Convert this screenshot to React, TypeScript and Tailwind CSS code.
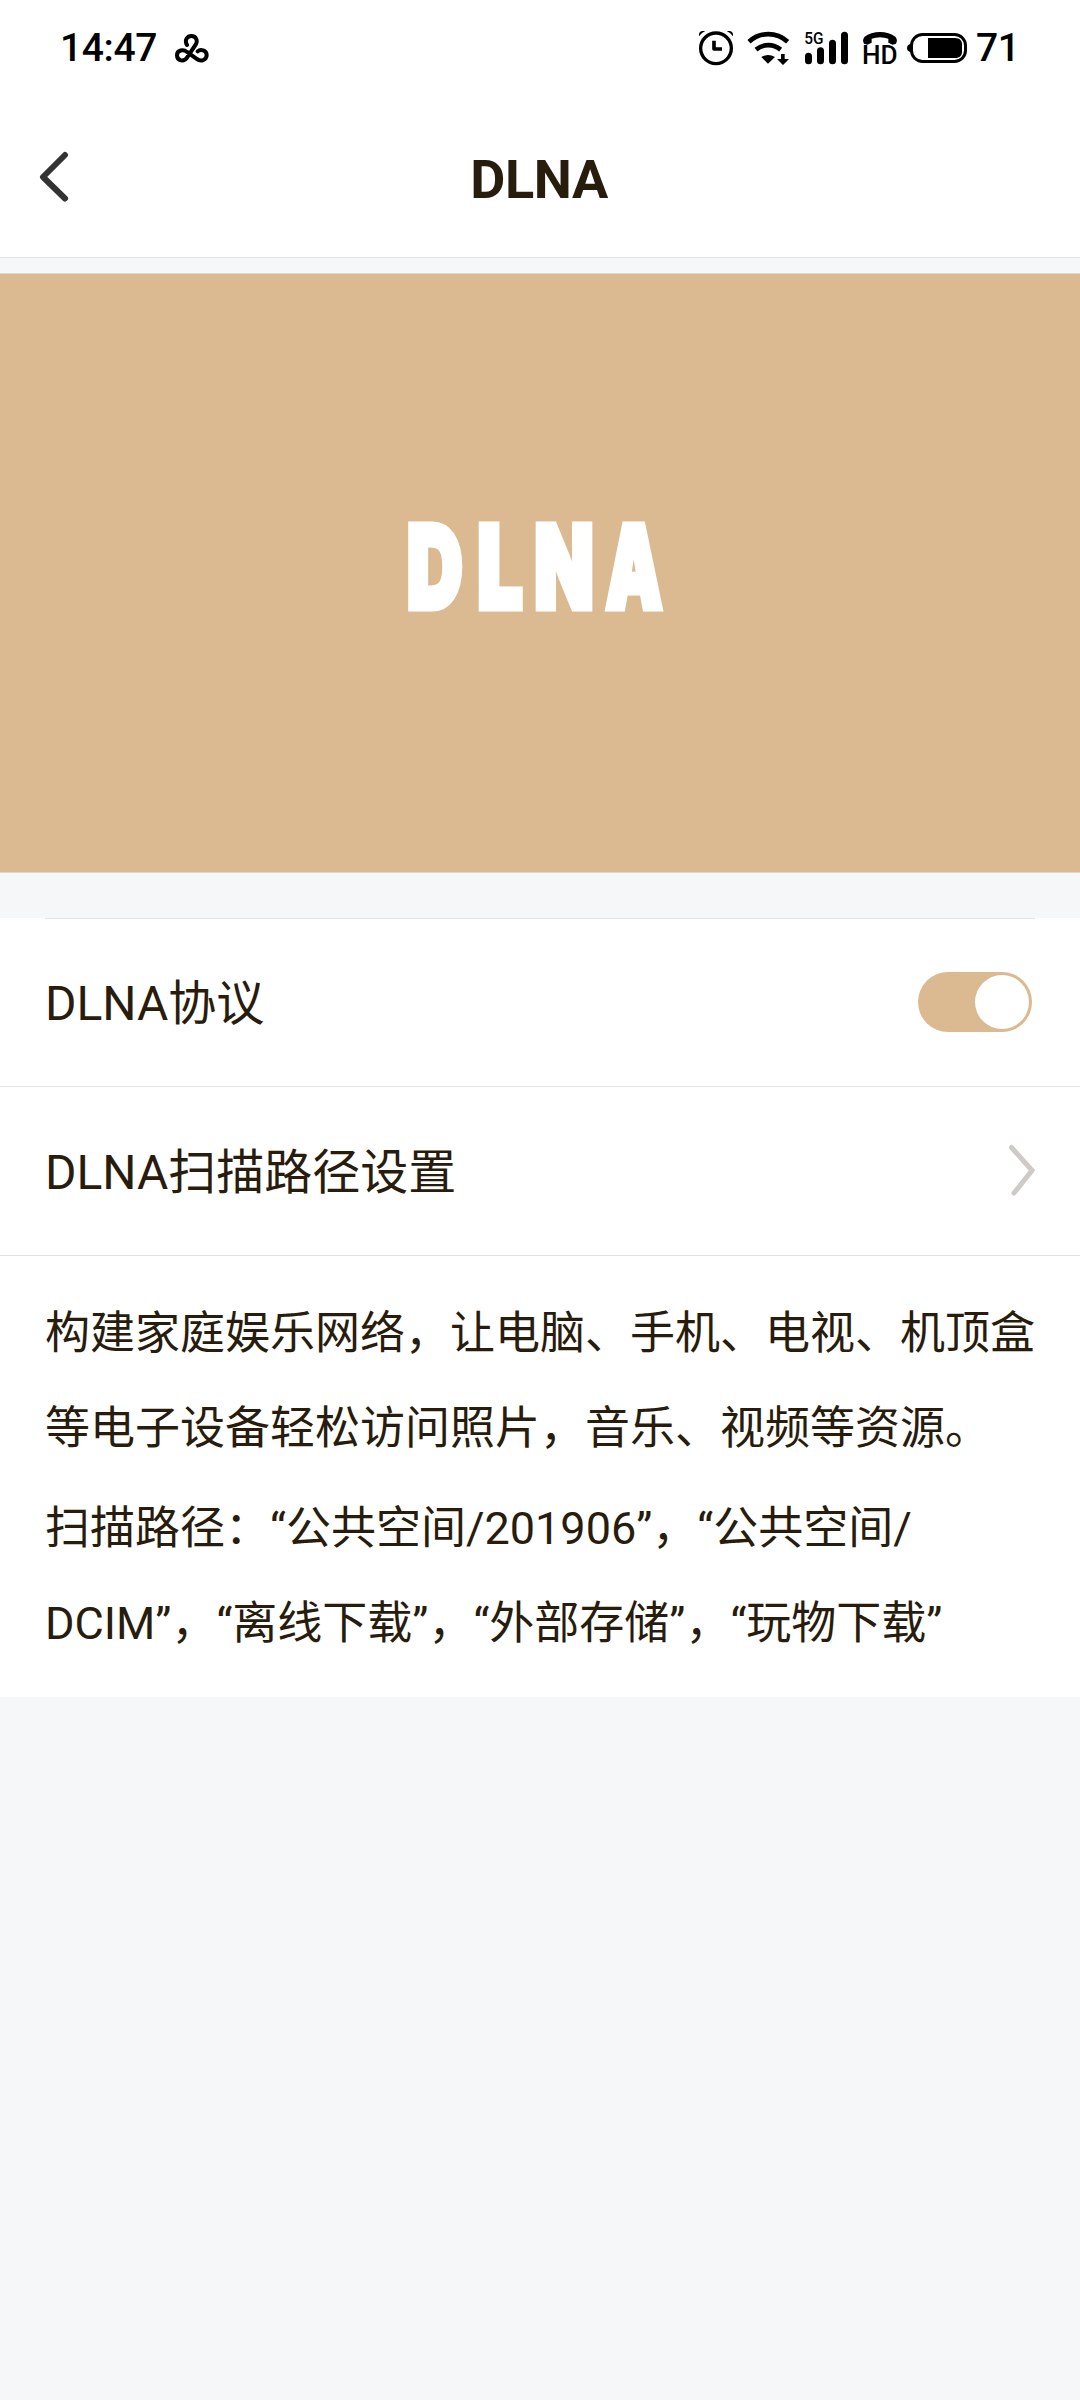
import React, { useState } from 'react';

const LOGO_LETTERS = [
  { char: 'D', x: 2, width: 55.5 },
  { char: 'L', x: 72.5, width: 45 },
  { char: 'N', x: 129.5, width: 59 },
  { char: 'A', x: 201, width: 56 },
];

const DESCRIPTION = [
  ['构建家庭娱乐网络，让电脑、手机、电视、机顶盒', '等电子设备轻松访问照片，音乐、视频等资源。'],
  ['扫描路径：“公共空间/201906”，“公共空间/', 'DCIM”，“离线下载”，“外部存储”，“玩物下载”'],
];

const TrefoilIcon = () => (
  <svg className="h-[30px] w-[35px]" viewBox="521 99 105 90" fill="none" stroke="#000" strokeWidth="12" strokeLinecap="round">
    <path d="M560 135C551 119 562 108 573 108C588 108 593 123 586 134L562 170C552 187 530 184 530 166C530 150 549 147 560 156L588 176C602 187 619 180 619 165C619 150 600 146 592 154" />
  </svg>
);

const AlarmIcon = () => (
  <svg className="h-9 w-9" viewBox="54 60 108 108" fill="none" stroke="#000">
    <circle cx="108" cy="115" r="46" strokeWidth="10" />
    <path d="M102 92V117H126" strokeWidth="11" strokeLinejoin="round" />
    <path d="M57 79V72Q59 63 68 63H76Q64 68 57 79ZM159 79V72Q157 63 148 63H140Q152 68 159 79Z" fill="#000" stroke="none" />
  </svg>
);

const WifiIcon = () => (
  <svg className="h-9 w-[43px]" viewBox="201 60 129 108" fill="none" stroke="#000" strokeWidth="14">
    <path d="M207 95C241 65 289 65 323 95" />
    <path d="M228 119C251 101 279 101 302 119" />
    <path d="M244 141Q264 129 285 141L264 161Z" fill="#000" stroke="none" />
    <path d="M303 132H314V147H327L309 165L291 147H303Z" fill="#000" stroke="none" />
  </svg>
);

const SignalIcon = () => (
  <svg className="h-9 w-[45px] overflow-visible" viewBox="372 60 135 108">
    <text x="373" y="101" fontSize="47" fontWeight="500" textLength="58" lengthAdjust="spacingAndGlyphs">5G</text>
    <path d="M385.500 139V152M421.500 122V152M457.500 100V152M493.500 76V152" stroke="#000" strokeWidth="21" strokeLinecap="round" />
  </svg>
);

const HdIcon = () => (
  <svg className="h-9 w-9 overflow-visible" viewBox="6 60 108 108">
    <path d="M12 101C8 93 8 87 14 80C36 61 84 61 106 80C112 87 112 93 108 101L98 104L85 98V86C68 80 52 80 35 86V98L22 104Z" />
    <text x="6" y="161" fontSize="75" fontWeight="500" textLength="107" lengthAdjust="spacingAndGlyphs">HD</text>
  </svg>
);

const BatteryIcon = () => (
  <svg className="h-9 w-[62px]" viewBox="138 60 186 108">
    <rect x="154.500" y="73.500" width="162" height="81" rx="33" fill="none" stroke="#000" strokeWidth="9" />
    <path d="M152 101C144 104 141 108 141 114C141 120 144 124 152 127Z" />
    <path d="M204 84H285C300 84 306 93 306 103V125C306 135 300 144 285 144H204Z" />
  </svg>
);

const StatusBar = () => (
  <div className="flex h-24 items-center justify-between pl-[60px] pr-[62px] text-black">
    <div className="flex items-center gap-[16px]">
      <span className="w-[98px] text-[39px] font-medium leading-none tracking-[-0.4px]">14:47</span>
      <TrefoilIcon />
    </div>
    <div className="flex items-center">
      <AlarmIcon />
      <div className="ml-[13px] flex"><WifiIcon /></div>
      <div className="ml-[14px] flex"><SignalIcon /></div>
      <div className="ml-[13px] flex"><HdIcon /></div>
      <div className="ml-2 flex"><BatteryIcon /></div>
      <span className="ml-2 w-[42px] text-[39px] font-medium leading-none tracking-[-0.4px]">71</span>
    </div>
  </div>
);

interface SwitchProps {
  checked: boolean;
  onChange: (value: boolean) => void;
}

const Switch: React.FC<SwitchProps> = ({ checked, onChange }) => (
  <button
    type="button"
    role="switch"
    aria-checked={checked}
    onClick={() => onChange(!checked)}
    className={`mr-[3px] mb-[2px] flex h-[60px] w-[114px] items-center rounded-full p-[3px] ${checked ? 'justify-end bg-[#dbb991]' : 'justify-start bg-gray-200'}`}
  >
    <span className="size-[54px] rounded-full bg-white" />
  </button>
);

const App: React.FC = () => {
  const [enabled, setEnabled] = useState(true);

  return (
    <div className="min-h-screen w-[1080px] bg-[#f5f7f9] font-['Roboto','Noto_Sans_CJK_SC',sans-serif] text-[#281c0d]">
      <header className="h-[258px] border-b border-[#e3e4e6] bg-white">
        <StatusBar />
        <div className="grid h-[161px] grid-cols-[1fr_auto_1fr] items-center px-[39px]">
          <svg className="h-[52px] w-[30px]" viewBox="0 0 30 52" fill="none" stroke="#333" strokeWidth="6" strokeLinecap="round" strokeLinejoin="round">
            <path d="M26 4L4 26L26 47.500" />
          </svg>
          <h1 className="pr-[2px] pt-[6px] text-[54px] font-bold leading-none tracking-[-0.4px]">DLNA</h1>
        </div>
      </header>

      <div className="mt-[15px] flex h-[600px] items-center justify-center border-y border-[#dcd8d4] bg-[#dbb991]">
        <svg className="h-[160px] w-[270px] overflow-visible font-['Inter',sans-serif]" viewBox="0 0 270 160" fill="#fff" stroke="#fff" strokeWidth="7">
          {LOGO_LETTERS.map(({ char, x, width }) => (
            <text key={char} x={x} y="115" fontSize="113.5" fontWeight="900" textLength={width} lengthAdjust="spacingAndGlyphs">
              {char}
            </text>
          ))}
        </svg>
      </div>

      <main className="mt-[45px] bg-white">
        <div className="mx-[45px] h-px bg-[#e3e4e6]" />
        <div className="flex h-[168px] items-center justify-between border-b border-[#e3e4e6] px-[45px]">
          <span className="pt-[3px] text-[48px] leading-none">DLNA协议</span>
          <Switch checked={enabled} onChange={setEnabled} />
        </div>
        <div className="flex h-[169px] items-center justify-between border-b border-[#e3e4e6] px-[45px]">
          <span className="pt-[3px] text-[48px] leading-none">DLNA扫描路径设置</span>
          <svg className="mb-[2px] h-[52px] w-[27px]" viewBox="0 0 27 52" fill="none" stroke="#cecac8" strokeWidth="5" strokeLinecap="round">
            <path d="M3.500 3.500L24 26.500L6 49" />
          </svg>
        </div>
        <div className="px-[45px] pb-[26px] pt-[31px] text-[45px] leading-[94.5px]">
          {DESCRIPTION.map((lines, i) => (
            <p key={i} className="whitespace-nowrap not-first:mt-[6px]">
              {lines[0]}
              <br />
              {lines[1]}
            </p>
          ))}
        </div>
      </main>
    </div>
  );
};

export default App;
